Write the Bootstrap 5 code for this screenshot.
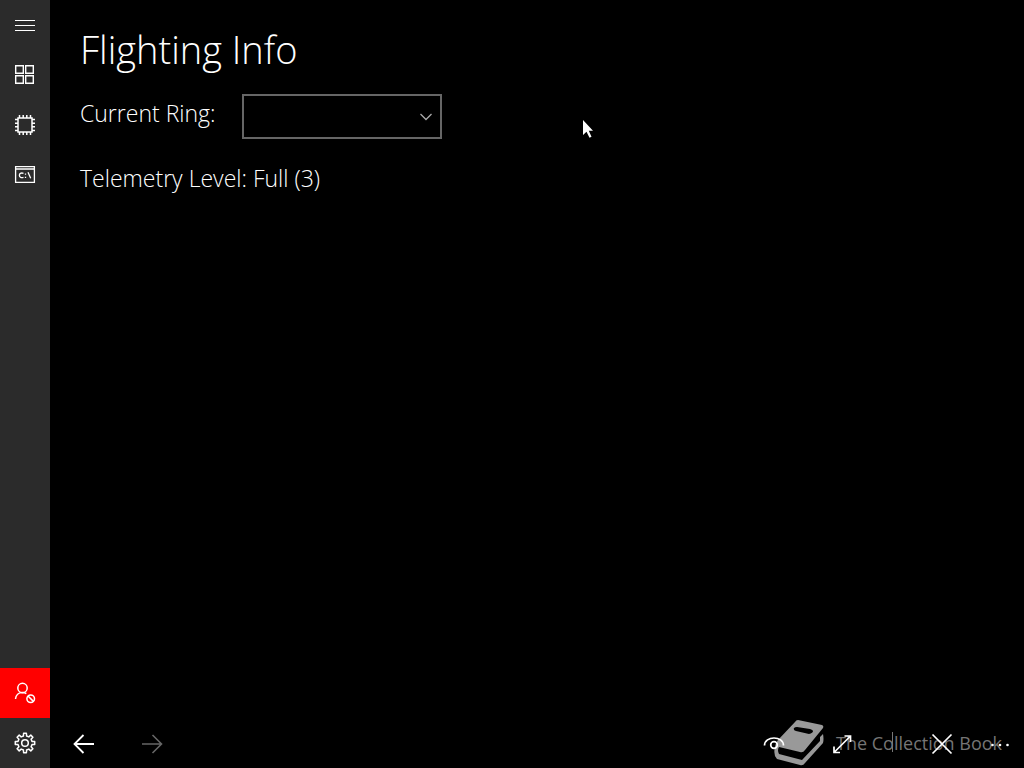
<!DOCTYPE html>
<html lang="en">
<head>
<meta charset="utf-8">
<meta name="viewport" content="width=device-width, initial-scale=1">
<title>Flighting Info</title>
<link href="https://cdn.jsdelivr.net/npm/bootstrap@5.3.0/dist/css/bootstrap.min.css" rel="stylesheet">
<style>
body { background: #000; color: #fff; font-family: "Open Sans", "Noto Sans", sans-serif; font-weight: 300; }
svg { display: block; fill: none; stroke: currentColor; }
.side-rail { width: 50px; background: #2b2b2b; }
.tool-btn, .tool-btn:hover { border: 0; border-radius: 0; padding: 0; color: #fff; height: 50px; }
.rail-btn { width: 50px; }
.rail-alert, .rail-alert:hover { background: #f00; }
.bar-btn { width: 68px; }
.bar-more { width: 48px; }
.bar-btn:disabled { color: #666; border: 0; opacity: 1; }
.page-body { padding: 22px 30px 0; }
.page-title { font-size: 38px; line-height: 54px; font-weight: 300; }
.info-text { font-size: 23px; line-height: 32px; }
.ring-row { margin-top: 18px; margin-bottom: 23px; }
.ring-label { width: 162px; padding-top: 3px; }
.ring-select { display: block; width: 200px; height: 45px; border: 2px solid #666; border-radius: 0; background: #000; color: #fff; appearance: none; }
.ring-arrow { position: absolute; right: 9px; top: 18px; color: #aaa; pointer-events: none; }
.watermark { position: absolute; right: 22px; bottom: 2px; gap: 12px; color: #757575; font-size: 18px; line-height: 24px; font-weight: 400; pointer-events: none; }
.caret-line { position: absolute; left: 118px; top: 13px; width: 1px; height: 20px; background: #777; }
.pointer { position: absolute; left: 583px; top: 120px; pointer-events: none; }
</style>
</head>
<body>
<div class="d-flex vh-100 position-relative">
  <nav class="side-rail d-flex flex-column flex-shrink-0" aria-label="Main">
    <button type="button" class="btn tool-btn rail-btn" aria-label="Menu"><svg width="50" height="50"><path d="M15 20.5h20M15 25.5h20M15 30.5h20"/></svg></button>
    <button type="button" class="btn tool-btn rail-btn" aria-label="Apps"><svg width="50" height="50" stroke-width="1.4"><path d="M15.7 15.7h7.6v7.6h-7.6zM25.7 15.7h7.6v7.6h-7.6zM15.7 25.7h7.6v7.6h-7.6zM25.7 25.7h7.6v7.6h-7.6z"/></svg></button>
    <button type="button" class="btn tool-btn rail-btn" aria-label="Hardware"><svg width="50" height="50" stroke-width="1.5"><path d="M18 18h14v14H18zM19.5 15v3M23.2 15v3M26.8 15v3M30.5 15v3M19.5 32v3M23.2 32v3M26.8 32v3M30.5 32v3M15 19.5h3M15 23.2h3M15 26.8h3M15 30.5h3M32 19.5h3M32 23.2h3M32 26.8h3M32 30.5h3"/></svg></button>
    <button type="button" class="btn tool-btn rail-btn" aria-label="Command prompt"><svg width="50" height="50" stroke-width="1.3"><path d="M15.6 16.6h18.8v15.8H15.6zM15.6 19h18.8"/><path d="M23.5 23.3c-5.500-1.800-5.500 5.800 0 4M25.500 23.5v1.200M25.500 26.800v1.200M28 22.300l2.700 6"/></svg></button>
    <button type="button" class="btn tool-btn rail-btn rail-alert mt-auto" aria-label="Account blocked"><svg width="50" height="50" stroke-width="1.5"><circle cx="22.5" cy="20" r="4.7"/><path d="M15.5 31c.3-4 3.2-6.5 7-6.5 1.6 0 2.800.4 3.800 1.200"/><circle cx="30.7" cy="30.7" r="3.8"/><path d="M28 28l5.4 5.4"/></svg></button>
    <button type="button" class="btn tool-btn rail-btn" aria-label="Settings"><svg width="50" height="50" stroke-width="1.5" stroke-linejoin="round"><circle cx="25" cy="25" r="3.3"/><path d="M23.4 18l.2-2.7h2.8l.2 2.7 2.2.9 2-1.8 2.1 2.1-1.8 2 .9 2.2 2.7.2v2.8l-2.7.2-.9 2.2 1.8 2-2.1 2.1-2-1.8-2.2.9-.2 2.7h-2.8l-.2-2.7-2.2-.9-2 1.8-2.1-2.1 1.8-2-.9-2.2-2.7-.2v-2.8l2.7-.2.9-2.2-1.8-2 2.1-2.1 2 1.8z"/></svg></button>
  </nav>
  <div class="d-flex flex-column flex-grow-1 position-relative">
    <main class="page-body flex-grow-1">
      <h1 class="page-title mb-0">Flighting Info</h1>
      <div class="ring-row d-flex align-items-start info-text">
        <label class="ring-label" for="ring">Current Ring:</label>
        <div class="position-relative">
          <select id="ring" class="ring-select"><option></option></select>
          <svg class="ring-arrow" width="14" height="10" stroke-width="1.3"><path d="M1.5 2l5.5 5.500L12.500 2"/></svg>
        </div>
      </div>
      <p class="info-text mb-0">Telemetry Level: Full (3)</p>
    </main>
    <div class="watermark d-flex align-items-center">
      <svg width="50" height="47"><path style="fill:#999;stroke:none" fill-rule="evenodd" d="M24 1L48 6Q50 7 49 9L31 31Q29 34 26 33L5 28Q3 31 5 35L28 41L46 22V18L49 15Q50 20 49 24L31 44Q29 47 26 46L3 40Q-1 36 1 28Q1 24 4 21L21 3Q22 1 24 1ZM20 9Q19 11 22 12L35 15Q39 14 39 12Q39 11 36 10L23 8Q21 8 20 9Z"/></svg>
      <span>The Collection Book</span><i class="caret-line"></i>
    </div>
    <div class="d-flex position-relative" role="toolbar" aria-label="Page commands">
      <button type="button" class="btn tool-btn bar-btn" aria-label="Back"><svg width="68" height="50" stroke-width="1.8"><path d="M44 26H25M33.500 17L24.500 26l9 9"/></svg></button>
      <button type="button" class="btn tool-btn bar-btn" aria-label="Forward" disabled><svg width="68" height="50" stroke-width="1.6"><path d="M24 26h19M34.500 17l9 9-9 9"/></svg></button>
      <button type="button" class="btn tool-btn bar-btn ms-auto" aria-label="View"><svg width="68" height="50" stroke-width="1.7"><path d="M24.500 27.500c0-10 19-10 19 0"/><circle cx="34" cy="27" r="3.300"/></svg></button>
      <button type="button" class="btn tool-btn bar-btn" aria-label="Expand"><svg width="68" height="50" stroke-width="1.7"><path d="M26 34.500L42.500 18M36.500 18h6v6M26 28.500v6h6"/></svg></button>
      <span class="px-3"></span>
      <button type="button" class="btn tool-btn bar-btn" aria-label="Close"><svg width="68" height="50" stroke-width="1.7"><path d="M24.500 16.500l19 19M43.500 16.500l-19 19"/></svg></button>
      <button type="button" class="btn tool-btn bar-more" aria-label="More"><svg width="48" height="50" style="fill:#fff;stroke:none"><circle cx="16.500" cy="27" r="1.300"/><circle cx="24" cy="27" r="1.300"/><circle cx="31.500" cy="27" r="1.300"/></svg></button>
    </div>
  </div>
  <svg class="pointer" width="12" height="18" aria-hidden="true"><path style="fill:#fff;stroke:none" d="M0 0v15l3.500-3.300 3 6 2-1-2.700-6H10z"/></svg>
</div>
<script src="https://cdn.jsdelivr.net/npm/bootstrap@5.3.0/dist/js/bootstrap.bundle.min.js"></script>
</body>
</html>
